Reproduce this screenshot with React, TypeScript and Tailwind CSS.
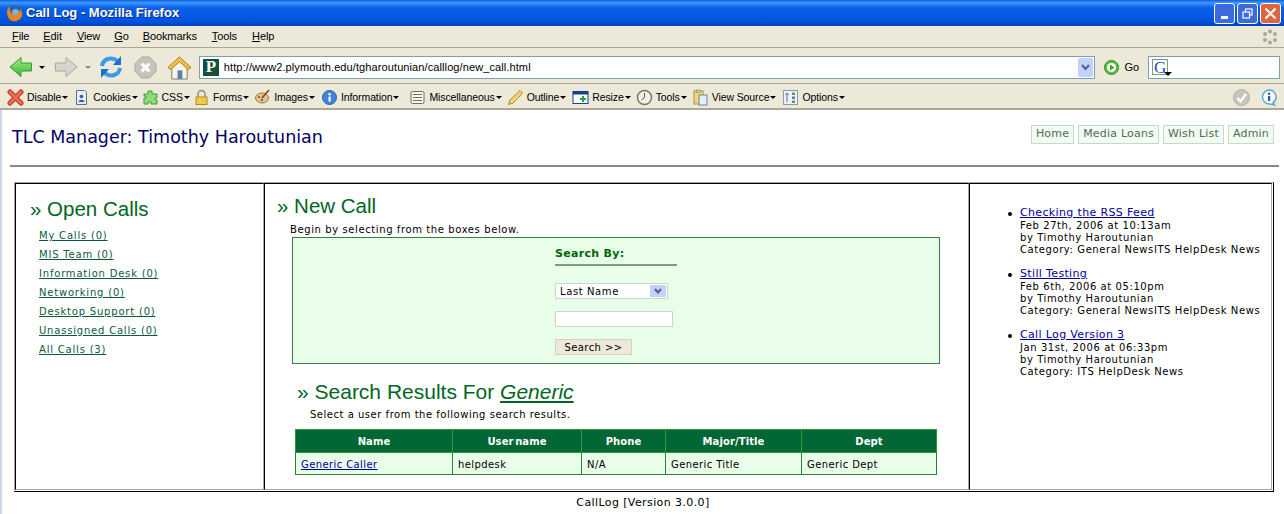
import React from "react";

const tahoma = "font-['Liberation_Sans',Arial,sans-serif]";
const verdana = "font-['DejaVu_Sans',Verdana,sans-serif]";

const MENU: [string, string][] = [
  ["File", "ml-[0px]"],
  ["Edit", "ml-[14px]"],
  ["View", "ml-[15px]"],
  ["Go", "ml-[14px]"],
  ["Bookmarks", "ml-[14px]"],
  ["Tools", "ml-[15px]"],
  ["Help", "ml-[15px]"],
];
const NAV_LINKS = ["Home", "Media Loans", "Wish List", "Admin"];
const CALLS = [
  "My Calls (0)",
  "MIS Team (0)",
  "Information Desk (0)",
  "Networking (0)",
  "Desktop Support (0)",
  "Unassigned Calls (0)",
  "All Calls (3)",
];
const NEWS = [
  { title: "Checking the RSS Feed", date: "Feb 27th, 2006 at 10:13am", cat: "General NewsITS HelpDesk News" },
  { title: "Still Testing", date: "Feb 6th, 2006 at 05:10pm", cat: "General NewsITS HelpDesk News" },
  { title: "Call Log Version 3", date: "Jan 31st, 2006 at 06:33pm", cat: "ITS HelpDesk News" },
];

function Caret() {
  return <span className="ml-px inline-block h-0 w-0 border-x-[3px] border-t-[3px] border-x-transparent border-t-black align-middle" />;
}

function DevIcon({ name }: { name: string }) {
  const box = { width: 17, height: 17, viewBox: "0 0 17 17" };
  switch (name) {
    case "Disable":
      return (
        <svg {...box}>
          <path d="M3 3 14 14M14 3 3 14" stroke="#b8382a" strokeWidth="5" strokeLinecap="round" />
          <path d="M3 3 14 14M14 3 3 14" stroke="#ee6a50" strokeWidth="3" strokeLinecap="round" />
        </svg>
      );
    case "Cookies":
      return (
        <svg {...box}>
          <path d="M3.500 1.500h8l2 2v12h-10z" fill="#e6ebf5" stroke="#56709c" />
          <circle cx="8.500" cy="7.500" r="1.800" fill="#3d5a8c" />
          <path d="M5.500 13c.5-3 5.500-3 6 0z" fill="#3d5a8c" />
        </svg>
      );
    case "CSS":
      return (
        <svg {...box}>
          <path d="M2 5h4V2h4v3h5v4h-2v2h2v4H9v-2H6v2H2V9h2V7H2z" fill="#8fdc7a" stroke="#3f9a3a" />
        </svg>
      );
    case "Forms":
      return (
        <svg {...box}>
          <path d="M5 8V5a3.500 3.500 0 0 1 7 0v3" fill="none" stroke="#8f8f80" strokeWidth="1.500" />
          <rect x="3" y="8" width="11" height="7.500" fill="#f2c94c" stroke="#b58a1e" />
        </svg>
      );
    case "Images":
      return (
        <svg {...box}>
          <ellipse cx="8" cy="9" rx="6.500" ry="5" fill="#e6c58a" stroke="#a07a3a" />
          <circle cx="5" cy="8" r="1.200" fill="#d9483a" />
          <circle cx="8" cy="11" r="1.200" fill="#3a7ad9" />
          <path d="M15 1 8 9" stroke="#7a4a20" strokeWidth="1.600" />
        </svg>
      );
    case "Information":
      return (
        <svg {...box}>
          <circle cx="8.500" cy="8.500" r="7" fill="#3d85dc" stroke="#2a62ad" />
          <rect x="7.500" y="7.500" width="2.200" height="5" fill="#fff" />
          <circle cx="8.600" cy="5.300" r="1.200" fill="#fff" />
        </svg>
      );
    case "Miscellaneous":
      return (
        <svg {...box}>
          <rect x="2" y="2.500" width="13" height="12" rx="1.500" fill="#f7f7f2" stroke="#6d6d60" />
          <path d="M4 5.500h9M4 8.500h9M4 11.500h9" stroke="#6d6d60" />
        </svg>
      );
    case "Outline":
      return (
        <svg {...box}>
          <path d="M1.500 15.500 3 11 13 1.500 15.500 4 6 14z" fill="#f2d774" stroke="#a38a2c" />
        </svg>
      );
    case "Resize":
      return (
        <svg {...box}>
          <rect x="1" y="2.500" width="15" height="12" fill="#fff" stroke="#173f8f" />
          <rect x="1" y="2.500" width="15" height="3" fill="#173f8f" />
          <path d="M10 7h2v2h2v2h-2v2h-2v-2H8V9h2z" fill="#2f9e3a" />
        </svg>
      );
    case "Tools":
      return (
        <svg {...box}>
          <circle cx="8.500" cy="8.500" r="7" fill="#f2f2ea" stroke="#77776c" strokeWidth="1.500" />
          <path d="M8.500 4v4.500L5.500 11" fill="none" stroke="#55554c" />
        </svg>
      );
    case "View Source":
      return (
        <svg {...box}>
          <rect x="2" y="2" width="9" height="13" fill="#f3d77c" stroke="#b2912e" />
          <rect x="7" y="6" width="8" height="10" fill="#e4eefb" stroke="#6384b5" />
          <rect x="4.500" y="1" width="4" height="2.500" fill="#c9c9bc" stroke="#77776c" strokeWidth=".5" />
        </svg>
      );
    default:
      return (
        <svg {...box}>
          <rect x="1.500" y="1.500" width="14" height="14" fill="#eef1f6" stroke="#8b9ab0" />
          <path d="M5 4v9M3.500 6 5 4l1.500 2" fill="none" stroke="#587098" />
          <rect x="10" y="3.500" width="3" height="2.500" fill="#5aa05a" />
          <rect x="10" y="7.500" width="3" height="2.500" fill="#5a7ac0" />
          <rect x="10" y="11.500" width="3" height="2.500" fill="#5aa05a" />
        </svg>
      );
  }
}

function TitleBar() {
  return (
    <div className="flex h-[26px] items-center bg-[linear-gradient(#0a5fe0_0%,#3d95ff_10%,#0a60e6_30%,#0054e3_75%,#0046c0_100%)] pl-[6px] pr-[3px]">
      <svg width="17" height="17" viewBox="0 0 17 17">
        <circle cx="8.500" cy="8.500" r="8" fill="#2f5fa8" />
        <circle cx="9.500" cy="7.500" r="3.500" fill="#7fb0e0" />
        <path d="M3 1.500C0 5 .5 12 4.500 15c4 2.500 9.500 1 11.500-4 .8-3-.5-5.500-2-7 .2 2.500-1.500 5.500-4.500 6-2.500.2-4.500-1-5-3.500C4 5 3.500 3.500 3 1.500z" fill="#e9841c" />
      </svg>
      <span className={`${tahoma} ml-[3px] text-[13px] font-bold text-white [text-shadow:1px_1px_#0a2f80]`}>Call Log - Mozilla Firefox</span>
      <div className="ml-auto flex gap-[2px]">
        <div className="flex h-[21px] w-[21px] items-end rounded-[3px] border border-white bg-[#3c6be0] pb-1 pl-[6px]">
          <div className="h-[3px] w-[7px] bg-white" />
        </div>
        <div className="flex h-[21px] w-[21px] items-center justify-center rounded-[3px] border border-white bg-[#3c6be0]">
          <svg width="11" height="11" viewBox="0 0 11 11" fill="none" stroke="#fff" strokeWidth="1.200">
            <rect x="3.500" y="1" width="6.500" height="6" />
            <rect x="1" y="4" width="6.500" height="6" fill="#3c6be0" />
          </svg>
        </div>
        <div className="flex h-[21px] w-[21px] items-center justify-center rounded-[3px] border border-white bg-[#e0643c]">
          <svg width="13" height="13" viewBox="0 0 13 13" stroke="#fff" strokeWidth="2.200">
            <path d="M1.500 1.500 11.500 11.500M11.500 1.500 1.500 11.500" />
          </svg>
        </div>
      </div>
    </div>
  );
}

function MenuBar() {
  return (
    <div className={`${tahoma} flex h-[22px] items-center border-b border-[#aca899] bg-[#ece9d8] pl-3 pr-[6px] text-[11px] tracking-[-0.1px] text-black`}>
      {MENU.map(([item, gap]) => (
        <span key={item} className={gap}>
          <span className="underline">{item[0]}</span>
          {item.slice(1)}
        </span>
      ))}
      <svg className="ml-auto" width="16" height="16" viewBox="0 0 16 16" fill="#a9a9a0">
        <circle cx="8" cy="2.500" r="2" />
        <circle cx="13" cy="5" r="2" />
        <circle cx="13" cy="11" r="2" />
        <circle cx="8" cy="13.500" r="2" />
        <circle cx="3" cy="11" r="2" />
        <circle cx="3" cy="5" r="2" />
      </svg>
    </div>
  );
}

function NavBar() {
  return (
    <div className="flex h-[36px] items-center border-b border-[#aca899] bg-[#ece9d8] pl-[9px] pr-[4px] pt-[3px]">
      <svg width="24" height="24" viewBox="0 0 24 24">
        <defs>
          <linearGradient id="bk" x1="0" y1="0" x2="0" y2="1">
            <stop offset="0" stopColor="#a8ec80" />
            <stop offset="1" stopColor="#34b83c" />
          </linearGradient>
        </defs>
        <path d="M1 12 12 2.500v5.500h10.500v8H12v5.500z" fill="url(#bk)" stroke="#2f9a2c" />
      </svg>
      <span className="ml-[6px] inline-block h-0 w-0 border-x-[3px] border-t-[3px] border-x-transparent border-t-black" />
      <svg className="ml-[9px]" width="24" height="24" viewBox="0 0 24 24">
        <path d="M23 12 12 2.500v5.500H1.500v8H12v5.500z" fill="#d6d6ce" stroke="#a6a69e" />
      </svg>
      <span className="ml-[7px] inline-block h-0 w-0 border-x-[3px] border-t-[3px] border-x-transparent border-t-[#888]" />
      <svg className="ml-[8px]" width="24" height="26" viewBox="0 0 24 26" fill="none" strokeWidth="4">
        <path d="M3 12C4 5 12 2 19 7" stroke="#3c9be8" />
        <path d="M21 14c-1 7-9 10-16 5" stroke="#3c9be8" />
        <path d="M22 2v9h-8zM2 24v-9h8z" fill="#1f6fc8" stroke="none" />
      </svg>
      <svg className="ml-[11px]" width="23" height="23" viewBox="0 0 24 24">
        <path d="M8 1h8l7 7v8l-7 7H8l-7-7V8z" fill="#c4c4bc" stroke="#a8a8a0" strokeLinejoin="round" />
        <path d="M8 8l8 8M16 8l-8 8" stroke="#fff" strokeWidth="3.500" />
      </svg>
      <svg className="ml-[10px]" width="25" height="25" viewBox="0 0 26 26">
        <path d="M5 12v13h16V12L13 4z" fill="#f5f5ee" stroke="#77776c" />
        <path d="M1 13 13 2l12 11-3 2-9-8-9 8z" fill="#efc33f" stroke="#9e7f1c" />
        <rect x="11" y="16" width="5" height="9" fill="#5d7fa8" />
      </svg>
      <div className="ml-[7px] flex h-[23px] w-[897px] items-center border border-[#7f9db9] bg-white">
        <div className="ml-[3px] flex h-[17px] w-[16px] items-center justify-center bg-[#14503c] font-['Liberation_Serif',serif] text-[17px] font-bold text-white">P</div>
        <span className={`${tahoma} ml-[5px] text-[11px] tracking-[0.1px] text-black`}>http://www2.plymouth.edu/tgharoutunian/calllog/new_call.html</span>
        <div className="ml-auto mr-px flex h-[19px] w-[15px] items-center justify-center rounded-[2px] bg-[#c1d3fb]">
          <svg width="9" height="7" viewBox="0 0 9 7" fill="none" stroke="#4d6185" strokeWidth="2">
            <path d="M1 1 4.500 5 8 1" />
          </svg>
        </div>
      </div>
      <svg className="ml-[9px]" width="15" height="15" viewBox="0 0 15 15">
        <circle cx="7.500" cy="7.500" r="7" fill="#5cc23c" stroke="#2c8a24" />
        <circle cx="7.500" cy="7.500" r="4.500" fill="#fff" />
        <path d="M6 4.500 10.500 7.500 6 10.500z" fill="#3aa52c" />
      </svg>
      <span className={`${tahoma} ml-[6px] text-[11px] text-black`}>Go</span>
      <div className="ml-[9px] flex h-[23px] w-[132px] items-center border border-[#7f9db9] bg-white pl-[3px]">
        <span className="relative flex h-[16px] w-[16px] items-center justify-center border border-[#70a070] font-['Liberation_Serif',serif] text-[17px] leading-none text-[#1a4bc0]">
          G
          <span className="absolute -bottom-[2px] -right-[5px] h-0 w-0 border-x-[4px] border-t-[4px] border-x-transparent border-t-black" />
        </span>
      </div>
    </div>
  );
}

function DevToolbar() {
  const items: [string, string][] = [
    ["Disable", "ml-[0px]"],
    ["Cookies", "ml-[5px]"],
    ["CSS", "ml-[4px]"],
    ["Forms", "ml-[3px]"],
    ["Images", "ml-[5px]"],
    ["Information", "ml-[6px]"],
    ["Miscellaneous", "ml-[10px]"],
    ["Outline", "ml-[5px]"],
    ["Resize", "ml-[6px]"],
    ["Tools", "ml-[5px]"],
    ["View Source", "ml-[5px]"],
    ["Options", "ml-[6px]"],
  ];
  return (
    <div className="flex h-[26px] items-center border-b-2 border-[#aca899] bg-[#ece9d8] pl-[7px] pr-[7px] pt-[3px]">
      {items.map(([name, gap]) => (
        <div key={name} className={`${gap} flex items-center`}>
          <DevIcon name={name} />
          <span className={`${tahoma} ml-[3px] text-[10.5px] tracking-[-0.1px] text-black`}>{name}</span>
          <Caret />
        </div>
      ))}
      <svg className="ml-auto" width="17" height="17" viewBox="0 0 17 17">
        <circle cx="8.500" cy="8.500" r="8" fill="#c6c6bc" stroke="#b0b0a6" />
        <path d="M4.500 9 7.500 12.500 13 5" fill="none" stroke="#fff" strokeWidth="2.200" />
      </svg>
      <svg className="ml-[11px]" width="16" height="17" viewBox="0 0 16 17">
        <path d="M8 1a7 7 0 0 1 4 12.700L13.500 16 9 15A7 7 0 1 1 8 1z" fill="#fff" stroke="#58a8e0" strokeWidth="1.500" />
        <circle cx="8" cy="4.800" r="1.200" fill="#1d5fa8" />
        <rect x="7" y="7" width="2.200" height="5" fill="#1d5fa8" />
      </svg>
    </div>
  );
}

function OpenCalls() {
  return (
    <div className="w-[249px] shrink-0 border border-t-black border-l-black border-r-[#a8a8a8] border-b-[#a8a8a8] pl-[14px] pt-[13px]">
      <h2 className={`${tahoma} text-[20.5px] leading-[24px] text-[#006622]`}>» Open Calls</h2>
      <ul className="ml-[9px] mt-[8px] flex flex-col gap-[5px]">
        {CALLS.map((c) => (
          <li key={c} className="h-[14px] text-[10px] leading-[14px] tracking-[0.8px] text-[#0b5a3c] underline">{c}</li>
        ))}
      </ul>
    </div>
  );
}

function NewCall() {
  return (
    <div className="flex w-[705px] shrink-0 flex-col border border-t-black border-l-black border-r-[#a8a8a8] border-b-[#a8a8a8] pl-[12px] pt-[8px]">
      <h2 className={`${tahoma} text-[20.5px] leading-[27px] text-[#006622]`}>» New Call</h2>
      <p className="ml-[13px] mt-[4px] text-[10px] leading-[13px] tracking-[0.6px] text-black">Begin by selecting from the boxes below.</p>
      <div className="ml-[15px] mt-px flex h-[127px] w-[648px] flex-col items-start border border-[#3c7c4c] bg-[#e9fee9] pl-[262px] pt-[8px]">
        <div className="w-[122px] border-b-2 border-[#7f9a7f] pb-[3px] text-[11px] font-bold leading-[15px] tracking-[0.3px] text-[#006600]">Search By:</div>
        <div className="mt-[17px] flex h-[16px] w-[113px] items-center justify-between border border-[#ccd4cc] bg-white pl-[4px] pr-px text-[10px] tracking-[0.6px] text-black">
          Last Name
          <span className="flex h-[12px] w-[16px] items-center justify-center rounded-[1px] bg-[#c1d3fb]">
            <svg width="8" height="6" viewBox="0 0 8 6" fill="none" stroke="#4d6185" strokeWidth="2">
              <path d="M1 1 4 4.500 7 1" />
            </svg>
          </span>
        </div>
        <div className="mt-[12px] h-[16px] w-[118px] border border-[#ccd4cc] bg-white" />
        <div className="mt-[12px] flex h-[16px] w-[77px] items-center justify-center border border-[#d6d2c2] bg-[#ece9d8] text-[10px] tracking-[0.4px] text-black">Search &gt;&gt;</div>
      </div>
      <h2 className={`${tahoma} ml-[20px] mt-[14px] text-[21px] leading-[27px] text-[#006622]`}>
        » Search Results For <em className="underline">Generic</em>
      </h2>
      <p className="ml-[33px] mt-[3px] text-[10px] leading-[13px] tracking-[0.52px] text-black">Select a user from the following search results.</p>
      <table className="ml-[18px] mt-[8px] w-[642px] table-fixed border-collapse border border-[#2f7d3c] text-[10px] tracking-[0.4px]">
        <thead>
          <tr className="h-[23px] bg-[#006633] text-white">
            <th className="w-[157px] border border-[#2f9a3c] font-bold tracking-[0.1px]">Name</th>
            <th className="w-[129px] border border-[#2f9a3c] font-bold tracking-[0.1px] [word-spacing:-2px]">User name</th>
            <th className="w-[84px] border border-[#2f9a3c] font-bold tracking-[0.1px]">Phone</th>
            <th className="w-[136px] border border-[#2f9a3c] font-bold tracking-[0.1px]">Major/Title</th>
            <th className="border border-[#2f9a3c] font-bold tracking-[0.1px]">Dept</th>
          </tr>
        </thead>
        <tbody>
          <tr className="h-[22px] bg-[#e9fee9] text-black">
            <td className="border border-[#2f7d3c] pl-[5px] pt-[2px] text-[#000099] underline">Generic Caller</td>
            <td className="border border-[#2f7d3c] pl-[5px] pt-[2px]">helpdesk</td>
            <td className="border border-[#2f7d3c] pl-[5px] pt-[2px]">N/A</td>
            <td className="border border-[#2f7d3c] pl-[5px] pt-[2px]">Generic Title</td>
            <td className="border border-[#2f7d3c] pl-[5px] pt-[2px]">Generic Dept</td>
          </tr>
        </tbody>
      </table>
    </div>
  );
}

function NewsList() {
  return (
    <div className="min-w-0 flex-1 border border-t-black border-l-black border-r-[#a8a8a8] border-b-[#a8a8a8] pl-[50px] pt-[22px]">
      <ul className="flex flex-col gap-[11px]">
        {NEWS.map((n) => (
          <li key={n.title} className="relative text-[10px] leading-[12px] tracking-[0.58px] text-black">
            <span className="absolute -left-[12px] top-[6px] h-[4px] w-[4px] rounded-full bg-black" />
            <span className="block text-[11px] leading-[14px] tracking-[0.35px] text-[#000099] underline">{n.title}</span>
            <div>{n.date}</div>
            <div>by Timothy Haroutunian</div>
            <div>Category: {n.cat}</div>
          </li>
        ))}
      </ul>
    </div>
  );
}

export default function App() {
  return (
    <div className={`${verdana} h-[514px] w-[1284px] overflow-hidden bg-white`}>
      <TitleBar />
      <MenuBar />
      <NavBar />
      <DevToolbar />
      <div className="h-[404px] border-l-2 border-[#cdd6e4] bg-white">
        <div className="flex h-[55px] items-start justify-between pl-[10px] pr-[10px]">
          <h1 className="pt-[15px] text-[17.5px] leading-[24px] text-[#000066]">TLC Manager: Timothy Haroutunian</h1>
          <div className="mt-[15px] flex gap-[4px]">
            {NAV_LINKS.map((l) => (
              <span key={l} className="flex h-[19px] items-center border border-[#c4dcc4] bg-[#f2fcf2] px-[4px] text-[11px] tracking-[0.2px] text-[#4f6a5a]">{l}</span>
            ))}
          </div>
        </div>
        <hr className="ml-[8px] mr-[5px] h-[2px] border-0 bg-[#888888]" />
        <div className="ml-[12px] mt-[15px] flex h-[310px] w-[1260px] border border-t-[#a8a8a8] border-l-[#a8a8a8] border-r-black border-b-black pb-px pr-px">
          <OpenCalls />
          <NewCall />
          <NewsList />
        </div>
        <p className="mt-[3px] text-center text-[11px] leading-[16px] tracking-[0.4px] text-black">CallLog [Version 3.0.0]</p>
      </div>
    </div>
  );
}
